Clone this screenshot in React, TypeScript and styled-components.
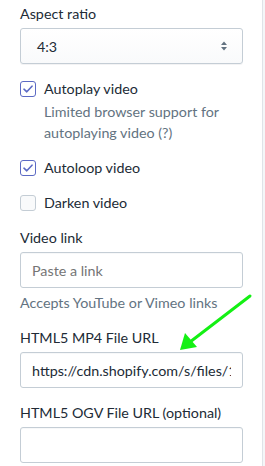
import React from "react";
import styled, { createGlobalStyle } from "styled-components";

const GlobalStyle = createGlobalStyle`
  html, body {
    margin: 0;
    padding: 0;
    background: #f4f6f8;
  }
  body {
    font-family: Lato, "Open Sans", sans-serif;
    color: #212b36;
  }
`;

const Panel = styled.div`
  position: relative;
  width: 263px;
  height: 466px;
  box-sizing: border-box;
  background: #ffffff;
  border-right: 1px solid #dfe3e8;
  padding: 4px 19px 0 20px;
  display: flex;
  flex-direction: column;
  gap: 15px;
  overflow: hidden;
  font-size: 14.3px;
`;

const Field = styled.div`
  display: flex;
  flex-direction: column;
  gap: 4px;
`;

const Label = styled.label`
  line-height: 20px;
  color: #212b36;
`;

const HelpText = styled.div<{ indent?: boolean }>`
  line-height: 21px;
  color: #637381;
  padding-left: ${(p) => (p.indent ? "24px" : "0")};
`;

const SelectBox = styled.div`
  height: 36px;
  box-sizing: border-box;
  border: 1px solid #c4cdd5;
  border-radius: 3px;
  background: linear-gradient(180deg, #ffffff, #f9fafb);
  box-shadow: 0 1px 0 0 rgba(22, 29, 37, 0.05);
  display: flex;
  align-items: center;
  justify-content: space-between;
  padding: 0 14px 0 16px;
  color: #212b36;
`;

const TextInput = styled.input`
  height: 36px;
  width: 100%;
  box-sizing: border-box;
  border: 1px solid #c4cdd5;
  border-radius: 3px;
  background: #ffffff;
  box-shadow: inset 0 1px 0 0 rgba(99, 115, 129, 0.05);
  padding: 0 11px;
  font-family: Lato, "Open Sans", sans-serif;
  font-size: 14.3px;
  color: #212b36;
  outline: none;

  ::placeholder {
    color: #919eab;
  }
`;

const CheckRow = styled.div`
  display: flex;
  align-items: center;
  gap: 8px;
  line-height: 20px;
`;

const Box = styled.span<{ checked?: boolean }>`
  width: 16px;
  height: 16px;
  box-sizing: border-box;
  border-radius: 3px;
  border: 1px solid ${(p) => (p.checked ? "#5c6ac4" : "#c4cdd5")};
  background: ${(p) => (p.checked ? "#ffffff" : "#f9fafb")};
  display: flex;
  align-items: center;
  justify-content: center;
  flex-shrink: 0;
`;

const CheckGroup = styled.div`
  display: flex;
  flex-direction: column;
  gap: 2px;
`;

const Arrow = styled.svg`
  position: absolute;
  left: 170px;
  top: 285px;
  pointer-events: none;
`;

const Check = ({ checked, label }: { checked?: boolean; label: string }) => (
  <CheckRow>
    <Box checked={checked}>
      {checked && (
        <svg width="10" height="8" viewBox="0 0 10 8">
          <path d="M1 4.2 L3.8 6.8 L9 1.2" fill="none" stroke="#5c6ac4" strokeWidth="1.6" strokeLinecap="round" strokeLinejoin="round" />
        </svg>
      )}
    </Box>
    <span>{label}</span>
  </CheckRow>
);

const App = () => (
  <>
    <GlobalStyle />
    <Panel>
      <Field>
        <Label>Aspect ratio</Label>
        <SelectBox>
          <span>4:3</span>
          <svg width="8" height="12" viewBox="0 0 8 12">
            <path d="M4 1.5 L7 5 H1 Z" fill="#637381" />
            <path d="M4 10.5 L7 7 H1 Z" fill="#637381" />
          </svg>
        </SelectBox>
      </Field>
      <CheckGroup>
        <Check checked label="Autoplay video" />
        <HelpText indent>Limited browser support for autoplaying video (?)</HelpText>
      </CheckGroup>
      <Check checked label="Autoloop video" />
      <Check label="Darken video" />
      <Field>
        <Label>Video link</Label>
        <TextInput placeholder="Paste a link" readOnly />
        <HelpText>Accepts YouTube or Vimeo links</HelpText>
      </Field>
      <Field>
        <Label>HTML5 MP4 File URL</Label>
        <TextInput readOnly value="https://cdn.shopify.com/s/files/1/0000/0001/files/video.mp4" />
      </Field>
      <Field>
        <Label>HTML5 OGV File URL (optional)</Label>
        <TextInput readOnly />
      </Field>
      <Arrow width="95" height="75" viewBox="0 0 95 75">
        <line x1="80" y1="11" x2="20" y2="57" stroke="#14f014" strokeWidth="3" strokeLinecap="round" />
        <path d="M10 65 L15 48 L27 62 Z" fill="#14f014" />
      </Arrow>
    </Panel>
  </>
);

export default App;
